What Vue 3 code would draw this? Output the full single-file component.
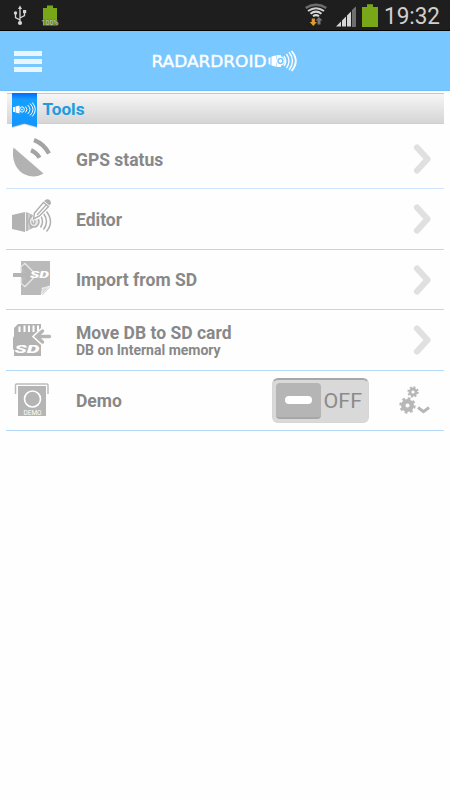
<template>
    <div class="screen">
        <div class="status">
            <svg class="status__left" width="80" height="30" viewBox="0 0 80 30">
                <g stroke="#d6d6d6" stroke-width="1.3" fill="none">
                    <path d="M20 8V22M20 20L15.500 17.500V13M20 18L24.500 15.500V12" />
                    <path d="M20 5.500L22 9H18Z" fill="#d6d6d6" stroke="none" />
                    <circle cx="20" cy="23" r="2.100" fill="#d6d6d6" stroke="none" />
                    <circle cx="15.500" cy="13" r="1.700" fill="#d6d6d6" stroke="none" />
                    <path d="M23 10h3.200v3.200H23z" fill="#d6d6d6" stroke="none" />
                </g>
                <path d="M43 8H47V5.500H53V8H57V25.500H43Z" fill="#78a817" />
                <text x="41.500" y="24.800" font-size="7.500" textLength="17" lengthAdjust="spacingAndGlyphs" fill="#d5dcc8" stroke="#4d6420" stroke-width=".8" paint-order="stroke">100%</text>
            </svg>
            <svg class="status__right" width="150" height="30" viewBox="300 0 150 30">
                <g fill="none" stroke-width="2">
                    <path d="M305.700 8Q316 1.500 326.300 8" stroke="#6c6c6c" stroke-width="2.400" />
                    <path d="M308 11Q316 5.500 324 11" stroke="#cfcfcf" />
                    <path d="M310.500 13.800Q316 9.500 321.500 13.800" stroke="#d8d8d8" />
                    <path d="M313 16.300Q316 14 319 16.300" stroke="#d8d8d8" />
                </g>
                <path d="M311.700 18.500h3.200v3.500h2L313.300 26L309.700 22h2z" fill="#e09a35" />
                <path d="M317.500 24.500v-4h-2L319 17l3.500 3.500h-2v4z" fill="#777" />
                <path d="M336 26.500L355.500 7V26.500Z" fill="#d6d6d6" />
                <path d="M352 10.400L356 6.500V26.500H352Z" fill="#6e6e6e" />
                <path d="M341.500 18V27M346.500 13V27M351.500 8V27" stroke="#1e1e1e" stroke-width="1" />
                <path d="M362 7H367V4.300H373V7H378V27H362Z" fill="#78a817" />
                <text x="384" y="23.700" font-size="24" textLength="56" lengthAdjust="spacingAndGlyphs" fill="#d0d0d0">19:32</text>
            </svg>
        </div>

        <div class="header">
            <div class="burger"><i></i><i></i><i></i></div>
            <svg class="logo" width="150" height="26" viewBox="0 0 150 26">
                <text class="logo__text" x="1.500" y="19" textLength="115" lengthAdjust="spacingAndGlyphs">RADARDROID</text>
                <path d="M118.500 10l2-1v8l-2-1zM121.500 8.500l5-1.300v11.600l-5-1.300zM127 7h4v12h-4z" fill="#fff" />
                <g fill="none" stroke="#fff" stroke-width="1.300">
                    <circle cx="130.500" cy="13" r="3.800" fill="#78c8ff" />
                    <circle cx="130.500" cy="13" r="1" />
                    <path d="M134 8q3.500 5 0 10M136.500 6q5 7 0 14M139 4q7 9 0 18" />
                    <path d="M141.500 3q8.500 10 0 20" stroke-width="1.900" />
                </g>
            </svg>
        </div>

        <div class="content">
            <div class="section">
                <svg class="ribbon" width="28" height="36" viewBox="0 0 28 36">
                    <defs>
                        <linearGradient id="ribbonFill" x1="0" y1="0" x2="0" y2="1">
                            <stop offset="0" stop-color="#0868ff" />
                            <stop offset=".2" stop-color="#14a0ff" />
                            <stop offset="1" stop-color="#1495ff" />
                        </linearGradient>
                    </defs>
                    <path d="M1 2V35L13.500 31.500L26 35V2Z" fill="#999" opacity=".45" />
                    <path d="M1 0V34L13.500 30.500L26 34V0Z" fill="url(#ribbonFill)" />
                    <path d="M2 14h2v5H2zM4.500 13.500l4-1v8l-4-1z" fill="#fff" />
                    <g fill="none" stroke="#fff" stroke-width="1">
                        <ellipse cx="11" cy="16.500" rx="2.300" ry="2.700" />
                        <circle cx="11" cy="16.500" r=".5" />
                        <path d="M14.500 13.500q3 3 0 6M16.700 12q4.500 4.500 0 9M19 10.500q6 6 0 12M21.300 9.500q6 7 0 14" />
                    </g>
                </svg>
                <h2>Tools</h2>
            </div>

            <div v-for="row in rows" :key="row.id" class="row" :class="'row--' + row.id">
                <svg class="row__icon" width="44" height="44" viewBox="0 0 44 44">
                    <g v-if="row.id === 'gps'" fill="none" stroke="#a3a3a3">
                        <path d="M3.500 11.500L33.500 37.500C25 43 14 40.500 8 33C3.300 27 2 19 3.500 11.500Z" fill="#b2b2b2" stroke="none" />
                        <path d="M24 4Q34 8 39 17.500" stroke-width="4.200" />
                        <path d="M21 14.200Q26.500 16.500 29.500 21.800" stroke-width="4.200" />
                    </g>
                    <g v-else-if="row.id === 'editor'" fill="none" stroke="#b0b0b0">
                        <path d="M2 18l13-3v20L2 32z" fill="#b2b2b2" stroke="none" />
                        <path d="M16 15l7 3v13l-7 3.500z" fill="#b8b8b8" stroke="none" />
                        <path d="M15.500 15V34M19 17V33" stroke="#eee" stroke-width=".8" />
                        <ellipse cx="24" cy="24.500" rx="5" ry="5.500" fill="#e6e6e6" stroke-width="1.500" />
                        <ellipse cx="23.500" cy="24.500" rx="1.500" ry="2.500" stroke-width="1.200" />
                        <path d="M30.500 18.500q4 6 0 12M33.500 16.500q6 8 0 16M36.500 14.500q8 10.500 0 20" stroke-width="1.500" />
                        <path d="M23.500 18.500L36 3L42 6.500L29 21L22.500 23Z" fill="#fff" stroke="#fff" stroke-width="1.500" />
                        <path d="M24.500 16L33.500 5.500L38.500 9.500L29.500 19L23.500 22Z" stroke-width="1.400" />
                        <path d="M27 18L36.500 7.500" stroke-width="1.200" />
                        <path d="M34 4L36.500 2.200Q41 2 41 6.500L39.500 8.500z" fill="#b0b0b0" stroke="none" />
                    </g>
                    <g v-else-if="row.id === 'import'">
                        <path d="M11 3H40V29L32.500 37H11Z" fill="#bababa" />
                        <path d="M40 28L31.500 37C31.500 33 33 31.500 32 30C35 30.500 37 28.500 40 28Z" fill="#d9d9d9" stroke="#f4f4f4" />
                        <path d="M11 14.500L11 9L15 5.500L23 13.500V20.500L15 28.500L11 25V20" stroke="#e8e8e8" stroke-width="1.300" fill="none" />
                        <path d="M3 17H20M13 8L21 17L13 26" fill="none" stroke="#b5b5b5" stroke-width="3.800" />
                        <text class="sd" x="20" y="20" font-size="8.500" textLength="19" lengthAdjust="spacingAndGlyphs">SD</text>
                    </g>
                    <g v-else-if="row.id === 'move'">
                        <path d="M8 4H31V36H4V30L3 29V18L4 16V8Z" fill="#b3b3b3" />
                        <path d="M9.500 6.500V12M14.500 5.500V12M19 5.500V12M23.500 5.500V12M28 5.500V11" stroke="#fff" stroke-width="2" />
                        <path d="M33 9.500L25.500 16.500L33 23.500M26 16.500H34" stroke="#fff" stroke-width="5" fill="none" />
                        <path d="M39.500 16.500H27M32.500 11L26.500 16.500L32.500 22" fill="none" stroke="#b5b5b5" stroke-width="3.400" stroke-linecap="round" />
                        <text class="sd" x="4.500" y="33" font-size="11" textLength="25" lengthAdjust="spacingAndGlyphs">SD</text>
                    </g>
                    <g v-else>
                        <path d="M5.500 14V5Q5.500 4 6.500 4H37Q38 4 38 5V14" fill="none" stroke="#bcbcbc" stroke-width="1.500" />
                        <path d="M8 6H36V36H8Z" fill="#b5b5b5" />
                        <circle cx="22.500" cy="19" r="8" fill="none" stroke="#fff" stroke-width="1.600" />
                        <text x="13.500" y="34.500" font-size="7" textLength="18" lengthAdjust="spacingAndGlyphs" fill="#fff">DEMO</text>
                    </g>
                </svg>
                <div class="row__text">
                    <p class="title">{{ row.title }}</p>
                    <p v-if="row.subtitle" class="subtitle">{{ row.subtitle }}</p>
                </div>
                <template v-if="row.id === 'demo'">
                    <button class="toggle" @click="demo = !demo">
                        <span class="toggle__knob"><i></i></span>
                        <svg width="44" height="24" viewBox="0 0 44 24">
                            <text x="1.500" y="19" font-size="20.500" textLength="39.500" lengthAdjust="spacingAndGlyphs" fill="#8b8b8b">{{ demo ? 'ON' : 'OFF' }}</text>
                        </svg>
                    </button>
                    <svg class="gears" width="32" height="30" viewBox="0 0 32 30">
                        <g fill="none" stroke="#b7b7b7">
                            <circle cx="15" cy="6" r="3" stroke-width="2.800" />
                            <circle cx="15" cy="6" r="4.800" stroke-width="1.800" stroke-dasharray="1.885" />
                            <circle cx="9.500" cy="19.500" r="4.300" stroke-width="4.400" />
                            <circle cx="9.500" cy="19.500" r="7.100" stroke-width="2.200" stroke-dasharray="2.788" />
                            <path d="M20 21.500L25.500 25.700L31 21.500" stroke-width="3" />
                        </g>
                    </svg>
                </template>
                <svg v-else class="arrow" width="20" height="34" viewBox="0 0 20 34">
                    <path d="M4 5.500L14.500 17L4 28.500" />
                </svg>
            </div>
        </div>
    </div>
</template>

<script setup>
import { ref } from 'vue'

const demo = ref(false)

const rows = [
    { id: 'gps', title: 'GPS status' },
    { id: 'editor', title: 'Editor' },
    { id: 'import', title: 'Import from SD' },
    { id: 'move', title: 'Move DB to SD card', subtitle: 'DB on Internal memory' },
    { id: 'demo', title: 'Demo' }
]
</script>

<style>
body{
    margin: 0;
    background: #fefefe;
}
</style>

<style scoped>
.screen{
    width: 450px;
    height: 800px;
    overflow: hidden;
    background: #fefefe;
    font-family: Roboto, "Liberation Sans", sans-serif;
}
.status{
    display: flex;
    justify-content: space-between;
    height: 30px;
    background: #1e1e1e;
    border-bottom: 1px solid #050505;
}
.header{
    box-sizing: border-box;
    display: flex;
    align-items: center;
    height: 60px;
    padding-left: 14px;
    background: #78c8ff;
    border-bottom: 1px solid #72c0f8;
}
.burger{
    display: flex;
    flex-direction: column;
    gap: 3px;
    width: 28px;
    margin-top: 1px;
}
.burger i{
    height: 5px;
    background: #eaf6ff;
}
.logo{
    margin-left: 108px;
}
.logo__text{
    font-family: "DejaVu Sans", sans-serif;
    font-size: 16px;
    fill: #fff;
    stroke: #fff;
    stroke-width: .4px;
}
.content{
    padding: 2px 6px 0;
}
.section{
    box-sizing: border-box;
    display: flex;
    height: 31px;
    margin-left: 1px;
    border-top: 1px solid #c6c6c6;
    border-bottom: 1px solid #cfcfcf;
    background: linear-gradient(#f6f6f6, #d5d5d5);
}
.ribbon{
    margin-left: 4px;
    margin-top: -1px;
    flex: none;
}
.section h2{
    margin: 0 0 0 3.5px;
    font-size: 17.2px;
    line-height: 31px;
    font-weight: 700;
    color: #209be0;
}
.row{
    box-sizing: border-box;
    display: flex;
    align-items: center;
    height: 60px;
    border-bottom: 1px solid #b6dafa;
}
.row--gps{
    height: 65px;
    padding-top: 6px;
    border-color: #cde6fc;
}
.row--gps .row__icon{
    margin-top: -2px;
}
.row--editor, .row--move{
    height: 61px;
}
.row--move .row__icon{
    margin-top: 3px;
}
.row--demo .row__icon{
    margin-top: 2px;
}
.row__icon{
    margin-left: 4px;
    flex: none;
}
.row__text{
    flex: 1;
    margin-left: 22px;
    padding-top: 1px;
}
.row p{
    margin: 0;
    white-space: nowrap;
    color: #888;
}
.title{
    font-size: 17.5px;
    line-height: 20px;
    font-weight: 700;
}
.row .subtitle{
    margin-top: -1px;
    font-size: 14px;
    line-height: 16px;
    font-weight: 700;
}
.sd{
    fill: #fff;
    font-weight: 900;
    font-style: italic;
}
.arrow{
    margin-right: 11px;
    fill: none;
    stroke: #e0e0e0;
    stroke-width: 6.2px;
    stroke-linecap: round;
    stroke-linejoin: round;
}
.toggle{
    box-sizing: border-box;
    display: flex;
    align-items: center;
    gap: 1px;
    width: 97px;
    height: 45px;
    margin-right: 29px;
    padding: 0 3px;
    border: 1px solid #d6d6d6;
    border-top: 2px solid #a7a7a7;
    border-radius: 6px;
    background: #d9d9d9;
    font-family: inherit;
}
.toggle__knob{
    box-sizing: border-box;
    display: flex;
    align-items: center;
    justify-content: center;
    flex: none;
    width: 45px;
    height: 36px;
    border-bottom: 2px solid #a6a6a6;
    border-radius: 4px;
    background: #b5b5b5;
}
.toggle__knob i{
    width: 27px;
    height: 8px;
    border-radius: 4px;
    background: #fff;
}
.gears{
    margin-right: 14px;
}
</style>
